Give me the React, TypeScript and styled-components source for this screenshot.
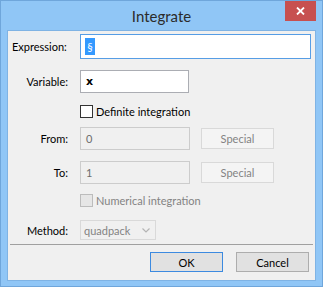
import React from 'react';
import styled, { createGlobalStyle } from 'styled-components';

const Global = createGlobalStyle`
  html, body { margin: 0; padding: 0; background: #ffffff; }
  body { font-family: Lato, "Noto Sans", sans-serif; font-size: 11px; color: #000; }
`;

const Window = styled.div`
  width: 323px;
  height: 287px;
  box-sizing: border-box;
  background: #90c6f6;
  border: 1px solid #6fa6db;
  padding: 0 6px 5px 6px;
  display: flex;
  flex-direction: column;
`;

const TitleBar = styled.div`
  height: 29px;
  flex: none;
  display: grid;
  grid-template-columns: 1fr auto 1fr;
  align-items: center;
`;

const Title = styled.div`
  grid-column: 2;
  font-size: 15px;
  color: #2b2b2b;
  margin-top: 1px;
`;

const CloseButton = styled.div`
  grid-column: 3;
  justify-self: end;
  align-self: start;
  width: 31px;
  height: 20px;
  background: #c75050;
  display: flex;
  align-items: center;
  justify-content: center;
`;

const Client = styled.div`
  flex: 1;
  background: #f0f0f0;
  border: 1px solid #7fb3e4;
  padding: 2px 4px 0 4px;
  display: flex;
  flex-direction: column;
`;

const Row = styled.div<{ $mt: number; $h: number }>`
  display: flex;
  align-items: center;
  margin-top: ${(p) => p.$mt}px;
  height: ${(p) => p.$h}px;
  flex: none;
`;

const Label = styled.div<{ $left?: boolean }>`
  width: 56px;
  margin-right: 12px;
  text-align: ${(p) => (p.$left ? 'left' : 'right')};
  white-space: nowrap;
  flex: none;
  color: #000;
`;

const Spacer = styled.div`
  width: 68px;
  flex: none;
`;

const TextBox = styled.div<{ $w?: number; $h: number; $focused?: boolean; $disabled?: boolean }>`
  box-sizing: border-box;
  ${(p) => (p.$w ? `width: ${p.$w}px;` : 'flex: 1;')}
  height: ${(p) => p.$h}px;
  border: 1px solid ${(p) => (p.$focused ? '#569de5' : p.$disabled ? '#cccccc' : '#abadb3')};
  background: ${(p) => (p.$disabled ? '#f0f0f0' : '#ffffff')};
  color: ${(p) => (p.$disabled ? '#6d6d6d' : '#000')};
  padding-left: 5px;
  display: flex;
  align-items: center;
`;

const Selected = styled.span`
  background: #3399ff;
  color: #ffffff;
  width: 10px;
  height: 17px;
  font-size: 11px;
  display: flex;
  align-items: center;
  justify-content: center;
  margin-left: -1px;
`;

const BoldX = styled.span`
  font-weight: bold;
  font-family: "DejaVu Sans", sans-serif;
  font-size: 11px;
`;

const CheckBox = styled.div<{ $disabled?: boolean }>`
  box-sizing: border-box;
  width: 13px;
  height: 13px;
  border: 1px solid ${(p) => (p.$disabled ? '#bcbcbc' : '#333333')};
  background: ${(p) => (p.$disabled ? '#e6e6e6' : '#ffffff')};
  margin-right: 3px;
  flex: none;
`;

const CheckLabel = styled.span<{ $disabled?: boolean }>`
  color: ${(p) => (p.$disabled ? '#838383' : '#000')};
  white-space: nowrap;
`;

const Button = styled.div<{ $disabled?: boolean; $default?: boolean; $ml?: number; $h: number }>`
  box-sizing: border-box;
  width: 73px;
  height: ${(p) => p.$h}px;
  margin-left: ${(p) => p.$ml ?? 0}px;
  border: 1px solid ${(p) => (p.$default ? '#3c8ae0' : p.$disabled ? '#d9d9d9' : '#adadad')};
  background: ${(p) => (p.$disabled ? '#f4f4f4' : '#e1e1e1')};
  color: ${(p) => (p.$disabled ? '#838383' : '#000')};
  display: flex;
  align-items: center;
  justify-content: center;
  flex: none;
`;

const Select = styled.div`
  box-sizing: border-box;
  width: 76px;
  height: 20px;
  border: 1px solid #d9d9d9;
  background: #f0f0f0;
  color: #838383;
  padding: 0 5px 0 3px;
  display: flex;
  align-items: center;
  justify-content: space-between;
`;

const Separator = styled.div`
  height: 1px;
  background: #a0a0a0;
  margin: 4px -2px 0 -2px;
  flex: none;
`;

const ButtonRow = styled.div`
  display: flex;
  justify-content: flex-end;
  gap: 13px;
  margin-top: 7px;
  margin-right: 2px;
`;

export default function App() {
  return (
    <>
      <Global />
      <Window>
        <TitleBar>
          <Title>Integrate</Title>
          <CloseButton>
            <svg width="9" height="8" viewBox="0 0 9 8">
              <path d="M1 0.5 L8 7.5 M8 0.5 L1 7.5" stroke="#ffffff" strokeWidth="1.8" />
            </svg>
          </CloseButton>
        </TitleBar>
        <Client>
          <Row $mt={1} $h={25}>
            <Label $left>Expression:</Label>
            <TextBox $h={25} $focused>
              <Selected>§</Selected>
            </TextBox>
          </Row>
          <Row $mt={11} $h={23}>
            <Label>Variable:</Label>
            <TextBox $w={109} $h={23}>
              <BoldX>x</BoldX>
            </TextBox>
          </Row>
          <Row $mt={12} $h={13}>
            <Spacer />
            <CheckBox />
            <CheckLabel>Definite integration</CheckLabel>
          </Row>
          <Row $mt={9} $h={23}>
            <Label>From:</Label>
            <TextBox $w={110} $h={23} $disabled>0</TextBox>
            <Button $disabled $ml={11} $h={21}>Special</Button>
          </Row>
          <Row $mt={11} $h={23}>
            <Label>To:</Label>
            <TextBox $w={110} $h={23} $disabled>1</TextBox>
            <Button $disabled $ml={11} $h={21}>Special</Button>
          </Row>
          <Row $mt={10} $h={13}>
            <Spacer />
            <CheckBox $disabled />
            <CheckLabel $disabled>Numerical integration</CheckLabel>
          </Row>
          <Row $mt={13} $h={20}>
            <Label>Method:</Label>
            <Select>
              <span>quadpack</span>
              <svg width="8" height="5" viewBox="0 0 8 5">
                <path d="M0.5 0.5 L4 4 L7.5 0.5" stroke="#b4b4b4" strokeWidth="1.2" fill="none" />
              </svg>
            </Select>
          </Row>
          <Separator />
          <ButtonRow>
            <Button $default $h={20}>OK</Button>
            <Button $h={20}>Cancel</Button>
          </ButtonRow>
        </Client>
      </Window>
    </>
  );
}
